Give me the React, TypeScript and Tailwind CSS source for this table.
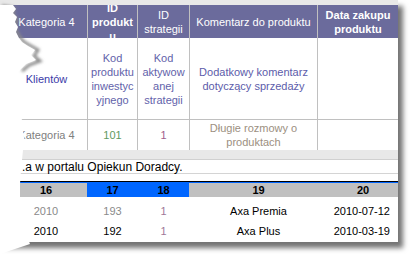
import React from "react";

const GRID = "border-[#c0c0c0]";

function TornEdge() {
  // torn paper edge on the left side, lies over the table
  return (
    <svg
      className="absolute left-0 top-0"
      width="48"
      height="254"
      viewBox="0 0 48 254"
    >
      <defs>
        <filter id="blur" x="-50%" y="-50%" width="200%" height="200%">
          <feGaussianBlur stdDeviation="1.6" />
        </filter>
      </defs>
      <polyline
        points="2,6 14,8 13,14 17,20 15,28 19,36 24,42 31,46 38,50 34,56 40,61 29,65 22,71"
        fill="none"
        stroke="#8a8a8a"
        strokeWidth="3"
        filter="url(#blur)"
      />
      <polygon
        points="0,5 13,5 16,9 13,13 17,17 15,22 18,27 16,32 19,38 22,42 28,46 35,50 31,55 36,60 26,64 20,70 15,78 11,88 9,100 13,110 19,116 24,122 23,132 25,142 23,150 22,160 21,170 20,184 20,198 21,210 23,222 26,234 30,244 0,254"
        fill="#ffffff"
      />
    </svg>
  );
}

function Cell({
  className,
  inner,
  children,
}: {
  className: string;
  inner?: string;
  children?: React.ReactNode;
}) {
  return (
    <div className={`flex items-center justify-center overflow-hidden ${className}`}>
      <div className={`w-full text-center break-words ${inner ?? ""}`}>{children}</div>
    </div>
  );
}

export default function App() {
  return (
    <div className="relative w-[411px] h-[254px] overflow-hidden bg-white font-['Liberation_Sans',Arial,sans-serif] text-[11px] leading-[14px]">
      <div className="flex flex-col w-[398px] h-[242px] bg-white shadow-[5px_6px_5px_rgba(0,0,0,0.55)]">
        {/* top band */}
        <div className="h-[5px] bg-[#e8e8e8]" />

        {/* column headers */}
        <div className="flex h-[33px] bg-[#6b6b9c] text-white">
          <Cell className={`w-[88px] shrink-0 border-r pl-[6px] ${GRID}`}>Kategoria 4</Cell>
          <Cell className={`w-[50px] shrink-0 border-r px-[2px] font-bold ${GRID}`}>ID produktu</Cell>
          <Cell className={`w-[52px] shrink-0 border-r px-[3px] ${GRID}`}>ID strategii</Cell>
          <Cell className={`w-[128px] shrink-0 border-r ${GRID}`}>Komentarz do produktu</Cell>
          <Cell className="w-[80px] shrink-0 px-[3px] font-bold">Data zakupu produktu</Cell>
        </div>

        {/* description row */}
        <div className={`flex h-[82px] border-b ${GRID}`}>
          <Cell className={`w-[88px] shrink-0 border-r pl-[6px] text-[#3a3aa8] ${GRID}`}>Klientów</Cell>
          <Cell className={`w-[50px] shrink-0 border-r px-[2px] text-[#6262aa] ${GRID}`}>
            Kod produktu inwestycyjnego
          </Cell>
          <Cell className={`w-[52px] shrink-0 border-r px-[3px] text-[#6262aa] ${GRID}`}>
            Kod aktywowanej strategii
          </Cell>
          <Cell className={`w-[128px] shrink-0 border-r px-[4px] text-[#5c5caa] ${GRID}`}>
            Dodatkowy komentarz dotyczący sprzedaży
          </Cell>
          <div className="w-[80px] shrink-0" />
        </div>

        {/* sample row */}
        <div className="flex h-[30px]">
          <Cell className={`w-[88px] shrink-0 border-r pl-[6px] text-[#808080] ${GRID}`}>Kategoria 4</Cell>
          <Cell className={`w-[50px] shrink-0 border-r text-[#5f9a5f] ${GRID}`}>101</Cell>
          <Cell className={`w-[52px] shrink-0 border-r text-[#a0608c] ${GRID}`}>1</Cell>
          <Cell className={`w-[128px] shrink-0 border-r px-[4px] text-[#9c8f7f] ${GRID}`}>
            Długie rozmowy o produktach
          </Cell>
          <div className="w-[80px] shrink-0" />
        </div>

        <div className="h-[10px] border-b border-[#d0d0d0] bg-[#e8e8e8]" />

        {/* note line */}
        <div className="h-[14px] border-b border-[#d4d4d4] pl-[22px] text-[12px] leading-[14px] text-black">
          .a w portalu Opiekun Doradcy.
        </div>

        <div className="h-[7px]" />
        <div className="h-px bg-black" />
        <div className="h-px bg-[#0066ff]" />

        {/* numbered columns */}
        <div className="flex h-[14px] font-bold text-black">
          <div className="flex w-[87px] items-center justify-center bg-[#c0c0c0] pl-[5px]">16</div>
          <div className="flex w-[51px] items-center justify-center bg-[#0066ff]">17</div>
          <div className="flex w-[51px] items-center justify-center bg-[#0066ff]">18</div>
          <div className="flex w-[139px] items-center justify-center bg-[#c0c0c0]">19</div>
          <div className="flex w-[70px] items-center justify-center bg-[#c0c0c0]">20</div>
        </div>

        <div className="h-[4px]" />

        {[
          { year: "2010", id: "193", name: "Axa Premia", date: "2010-07-12", muted: true },
          { year: "2010", id: "192", name: "Axa Plus", date: "2010-03-19", muted: false },
        ].map((r) => (
          <div key={r.id} className="flex h-[20px] items-center">
            <div className={`w-[87px] pl-[5px] text-center ${r.muted ? "text-[#8a8a8a]" : "text-black"}`}>
              {r.year}
            </div>
            <div className={`w-[51px] text-center ${r.muted ? "text-[#8a8a8a]" : "text-black"}`}>
              {r.id}
            </div>
            <div className="w-[51px] text-center text-[#a07898]">1</div>
            <div className="w-[139px] text-center text-black">{r.name}</div>
            <div className="w-[70px] pr-[8px] text-right text-black">{r.date}</div>
          </div>
        ))}
      </div>

      <TornEdge />
    </div>
  );
}
